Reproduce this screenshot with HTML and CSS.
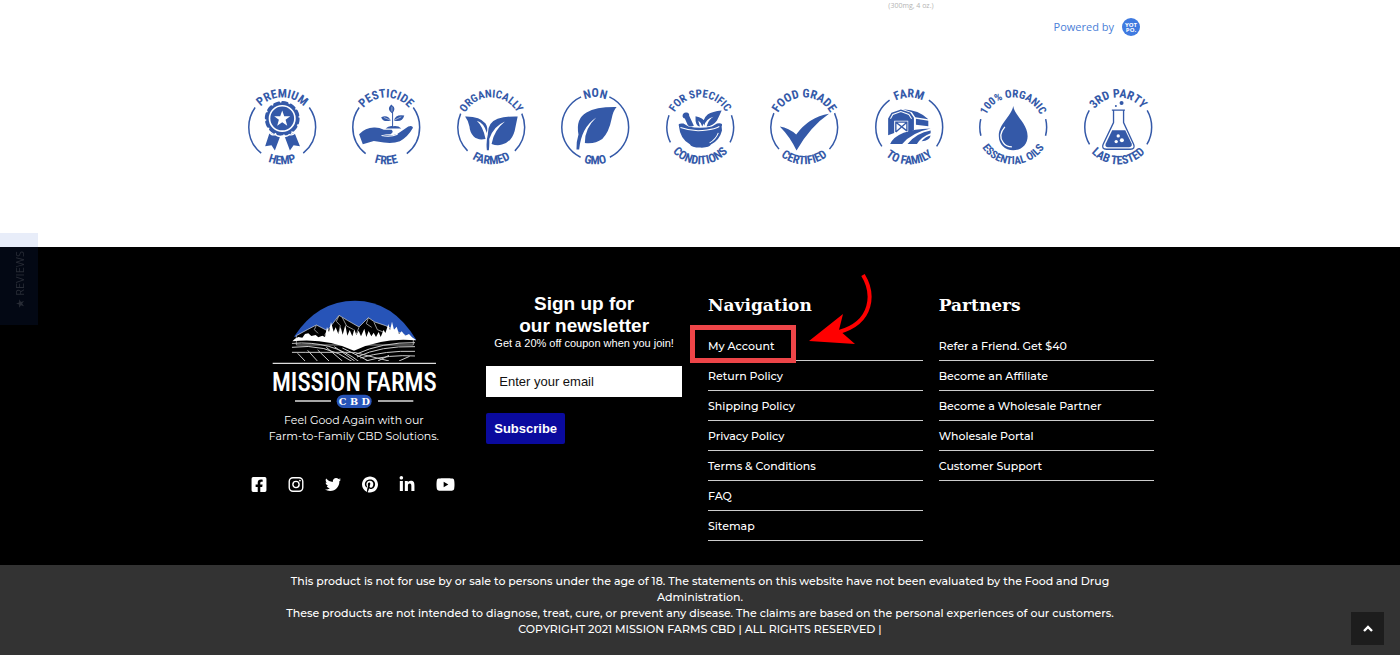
FILE: index.html
```html
<!DOCTYPE html>
<html lang="en">
<head>
<meta charset="utf-8">
<meta name="viewport" content="width=device-width, initial-scale=1">
<title>Mission Farms CBD</title>
<link rel="stylesheet" href="styles.css">
</head>
<body>
<svg class="defs" aria-hidden="true">
  <defs>
    <path id="arc-top" d="M-24 17A29.5 29.5 0 1 1 24 17"/>
    <path id="arc-bottom" d="M-35 -12A37 37 0 1 0 35 -12"/>
  </defs>
</svg>

<main class="top">
  <div class="reviews-end">
    <p class="product-note">(300mg, 4 oz.)</p>
    <a class="powered" href="#">Powered by
      <svg viewBox="0 0 18 18" width="18" height="18" aria-label="Yotpo"><circle cx="9" cy="9" r="9" fill="#3f7ae0"/><text x="9" y="8.5" class="yotpo">YOT</text><text x="9" y="14" class="yotpo">PO.</text></svg>
    </a>
  </div>

  <div class="badges">
    <svg class="badge short" viewBox="-52 -47 104 94">
      <circle class="ring" r="33.3" pathLength="360" stroke-dasharray="87 78 87 108" stroke-dashoffset="36"/>
      <text><textPath href="#arc-top" startOffset="50%">PREMIUM</textPath></text>
      <text><textPath href="#arc-bottom" startOffset="50%">HEMP</textPath></text>
      <g transform="scale(.3333) translate(-127 -141)">
        <path d="M89 158L76 198L95 195L105 211L121 168ZM164 158L180 198L161 195L150 211L134 168Z"/>
        <circle cx="127" cy="115" r="48"/>
        <circle cx="127" cy="115" r="48" fill="none" stroke="#3459a8" stroke-width="8" stroke-linecap="round" stroke-dasharray="14 11.1"/>
        <circle cx="127" cy="115" r="38" fill="none" stroke="#fff" stroke-width="5"/>
        <path fill="#fff" d="M127 91L133 108L151 108L137 119L142 137L127 126L112 137L117 119L103 108L121 108Z"/>
        <path fill="none" stroke="#fff" stroke-width="4" d="M84 151Q95 168 106 163Q116 172 127 167Q139 172 149 163Q160 167 170 151"/>
      </g>
    </svg>
    <svg class="badge short" viewBox="-52 -47 104 94">
      <circle class="ring" r="33.3" pathLength="360" stroke-dasharray="88 76 88 108" stroke-dashoffset="36"/>
      <text><textPath href="#arc-top" startOffset="50%">PESTICIDE</textPath></text>
      <text><textPath href="#arc-bottom" startOffset="50%">FREE</textPath></text>
      <g transform="scale(.3333) translate(-442 -141)">
        <path d="M361 162Q380 142 405 142Q420 141 435 149L458 149Q466 156 455 162L432 163Q455 168 475 161L508 139Q520 134 522 143Q507 170 483 183Q462 191 435 187L405 182L372 192Z"/>
        <path fill="none" stroke="#fff" stroke-width="3" d="M428 166Q455 172 476 162"/>
        <path d="M440 145Q450 135 463 138Q478 136 487 145ZM459 99Q442 87 457 73Q474 85 460 99ZM456 121Q432 127 427 111Q446 102 456 121ZM465 121Q470 101 496 106Q490 128 465 121Z"/>
        <path fill="none" stroke="#3459a8" stroke-width="3" d="M461 142V90"/>
        <path fill="none" stroke="#fff" stroke-width="1.5" d="M435 112L455 120M487 110L466 120M459 80V94"/>
      </g>
    </svg>
    <svg class="badge" viewBox="-52 -47 104 94">
      <circle class="ring" r="33.3" pathLength="360" stroke-dasharray="69 90 69 132" stroke-dashoffset="24"/>
      <text><textPath href="#arc-top" startOffset="50%">ORGANICALLY</textPath></text>
      <text class="short"><textPath href="#arc-bottom" startOffset="50%">FARMED</textPath></text>
      <g transform="scale(.3333) translate(-754 -141)">
        <path d="M676 109Q720 108 737 130Q745 143 741 158Q732 128 711 122Q730 140 737 176Q714 181 701 168Q690 156 689 139Q686 122 676 109Z"/>
        <path d="M833 109Q828 133 824 152Q815 185 786 193Q771 197 755 191Q762 150 795 124Q761 138 748 176Q749 192 747 210H741Q738 185 744 162Q743 127 773 116Q798 108 833 109Z"/>
      </g>
    </svg>
    <svg class="badge short" viewBox="-52 -47 104 94">
      <circle class="ring" r="33.3" pathLength="360" stroke-dasharray="129 52 129 50" stroke-dashoffset="65"/>
      <text><textPath href="#arc-top" startOffset="50%">NON</textPath></text>
      <text><textPath href="#arc-bottom" startOffset="50%">GMO</textPath></text>
      <g transform="scale(.3333) translate(-137 -141)">
        <path d="M201 81Q191 91 186 116Q178 157 158 176Q136 192 106 188Q105 145 140 112Q95 142 89 208H81Q80 185 87 163Q78 115 111 97Q140 80 201 81Z"/>
      </g>
    </svg>
    <svg class="badge" viewBox="-52 -47 104 94">
      <circle class="ring" r="33.3" pathLength="360" stroke-dasharray="48 126 48 138" stroke-dashoffset="21"/>
      <text><textPath href="#arc-top" startOffset="50%">FOR SPECIFIC</textPath></text>
      <text class="short"><textPath href="#arc-bottom" startOffset="50%">CONDITIONS</textPath></text>
      <g transform="scale(.3333) translate(-450 -141)">
        <path d="M386 136Q383 128 400 130L415 139Q450 147 485 139L500 130Q520 127 514 139L515 151Q508 180 482 193Q478 203 450 202Q423 202 419 192Q390 177 386 136Z"/>
        <path d="M397 108Q398 96 409 97Q418 98 417 107L431 137Q420 142 413 135L404 115Q399 115 397 108ZM436 108Q460 113 463 124L456 139Q452 126 444 121L449 139Q434 137 436 108ZM514 91Q507 107 500 121Q488 138 469 139Q475 118 490 110Q467 116 462 137Q455 117 473 102Q486 94 514 91Z"/>
        <path fill="none" stroke="#fff" stroke-width="3" d="M391 142Q430 156 470 149Q493 147 507 139M478 188Q497 177 504 158"/>
      </g>
    </svg>
    <svg class="badge short" viewBox="-52 -47 104 94">
      <circle class="ring" r="33.3" pathLength="360" stroke-dasharray="66 98 66 130" stroke-dashoffset="25"/>
      <text><textPath href="#arc-top" startOffset="50%">FOOD GRADE</textPath></text>
      <text><textPath href="#arc-bottom" startOffset="50%">CERTIFIED</textPath></text>
      <path transform="scale(.3333) translate(-764 -141)" d="M691 139Q718 143 740 163Q778 111 838 101Q781 140 741 211Q722 170 691 139Z"/>
    </svg>
    <svg class="badge short" viewBox="-52 -47 104 94">
      <circle class="ring" r="33.3" pathLength="360" stroke-dasharray="89 110 89 72" stroke-dashoffset="54"/>
      <text><textPath href="#arc-top" startOffset="50%">FARM</textPath></text>
      <text><textPath href="#arc-bottom" startOffset="50%">TO FAMILY</textPath></text>
      <g transform="scale(.3333) translate(-147 -141)">
        <path d="M84 165V115L94 98L122 88L150 97L161 113V150L144 157V122H102V158Z"/>
        <path d="M129 87Q176 89 204 117L165 111L155 96ZM167 116L204 122V138L167 134Z"/>
        <path fill="none" stroke="#3459a8" stroke-width="4" d="M107 155V126H140V152M107 126L140 152M140 126L107 155"/>
        <path fill="none" stroke="#fff" stroke-width="3" d="M91 116L98 103L122 94L146 103L154 116"/>
        <path d="M90 191Q110 148 211 145Q155 157 126 191ZM142 191Q169 158 211 151V159Q184 169 170 191ZM184 183Q195 170 211 166Q208 182 184 183Z"/>
      </g>
    </svg>
    <svg class="badge" viewBox="-52 -47 104 94">
      <circle class="ring" r="33.3" pathLength="360" stroke-dasharray="29 150 29 152" stroke-dashoffset="14"/>
      <text><textPath href="#arc-top" startOffset="50%">100% ORGANIC</textPath></text>
      <text><textPath href="#arc-bottom" startOffset="50%">ESSENTIAL OILS</textPath></text>
      <g transform="scale(.3333) translate(-459 -141)">
        <path d="M459 78C464 109 502 130 502 168C502 192 484 210 459 210C434 210 416 192 416 168C416 130 454 109 459 78Z"/>
        <path fill="none" stroke="#fff" stroke-width="4" d="M434 140Q412 166 429 187Q437 199 455 200"/>
      </g>
    </svg>
    <svg class="badge short" viewBox="-52 -47 104 94">
      <circle class="ring" r="33.3" pathLength="360" stroke-dasharray="61 118 61 120" stroke-dashoffset="30"/>
      <text><textPath href="#arc-top" startOffset="50%">3RD PARTY</textPath></text>
      <text><textPath href="#arc-bottom" startOffset="50%">LAB TESTED</textPath></text>
      <g transform="scale(.3333) translate(-773 -141)">
        <path fill="none" stroke="#3459a8" stroke-width="4" d="M754 90H793M759 92V127L728 192Q722 206 738 207H809Q825 206 819 192L789 127V92"/>
        <path d="M755 150H794L813 190Q816 200 806 201H741Q732 200 736 190Z"/>
        <circle cx="783" cy="69" r="6"/><circle cx="766" cy="78" r="3"/>
        <g fill="#fff"><circle cx="773" cy="167" r="5"/><circle cx="784" cy="180" r="6"/><circle cx="767" cy="184" r="5"/></g>
      </g>
    </svg>
  </div>
</main>

<footer>
  <div class="footer-main">
    <div class="columns">
      <section class="brand">
        <svg class="logo" viewBox="96 30 498 326">
          <clipPath id="field"><path d="M158 158Q270 145 345 187Q430 145 528 153V213H158Z"/></clipPath>
          <path fill="#2754b8" d="M165 140Q235 32 348 32Q462 32 532 150Z"/>
          <path fill="#000" stroke="#ddd" stroke-width="2" d="M172 137L205 119L232 105L265 122L300 76L325 91L360 111L388 83L407 96L440 107L475 125L523 147V165H172Z"/>
          <path fill="none" stroke="#ddd" stroke-width="2" d="M300 77L292 94L304 107L299 130M310 83L323 108L344 119M388 84L382 101L398 112M405 97L415 119L440 129M232 106L226 119L237 130M265 122L257 136M360 112L352 132"/>
          <path fill="#fff" d="M160 154L168 146L178 141L190 143L198 132L208 130L217 138L230 135L238 142L250 137L258 141L264 111L270 126L276 96L284 125L290 112L298 132L305 111L311 134L319 105L325 137L332 120L340 139L346 118L352 135L359 122L366 139L376 116L382 141L389 123L397 139L404 128L411 141L419 126L425 141L434 119L439 130L448 102L453 121L459 95L465 119L473 110L480 132L488 124L499 137L510 132L519 142L532 151Q430 141 345 182Q260 143 160 154Z"/>
          <path fill="none" stroke="#ccc" stroke-width="3" clip-path="url(#field)" d="M158 160Q280 151 360 215M158 172Q260 158 340 215M158 187Q240 187 345 187M176 190L198 213M206 181L235 213M236 180L270 213M262 172L310 213M286 170L347 213M310 174L389 213M528 158Q430 156 350 193M528 170Q425 167 354 201M528 184Q440 181 364 204M528 198Q450 193 380 213M345 187L450 213M450 196L417 213M512 199L480 213"/>
          <path stroke="#ddd" stroke-width="4" d="M101 220H591M168 333H276M417 333H523"/>
          <text class="wordmark" x="346" y="303">MISSION FARMS</text>
          <rect x="293" y="314" width="105" height="40" rx="20" fill="#2754b8"/>
          <text class="wordmark-sub" x="346" y="345">C B D</text>
        </svg>
        <p>Feel Good Again with our<br>Farm-to-Family CBD Solutions.</p>
        <nav class="social" aria-label="Social media">
          <a href="#" aria-label="Facebook"><svg viewBox="0 0 448 512"><path d="M400 32H48A48 48 0 0 0 0 80v352a48 48 0 0 0 48 48h137.25V327.69h-63V256h63v-54.64c0-62.15 37-96.48 93.67-96.48 27.14 0 55.52 4.84 55.52 4.84v61h-31.27c-30.81 0-40.42 19.12-40.42 38.73V256h68.78l-11 71.69h-57.78V480H400a48 48 0 0 0 48-48V80a48 48 0 0 0-48-48z"/></svg></a>
          <a href="#" aria-label="Instagram"><svg viewBox="0 0 448 512"><rect x="20" y="52" width="408" height="408" rx="112" fill="none" stroke="#fff" stroke-width="42"/><circle cx="224" cy="256" r="94" fill="none" stroke="#fff" stroke-width="42"/><circle cx="343" cy="137" r="27"/></svg></a>
          <a href="#" aria-label="Twitter"><svg viewBox="0 0 512 512"><path d="M459.37 151.716c.325 4.548.325 9.097.325 13.645 0 138.72-105.583 298.558-298.558 298.558-59.452 0-114.68-17.219-161.137-47.106 8.447.974 16.568 1.299 25.34 1.299 49.055 0 94.213-16.568 130.274-44.832-46.132-.975-84.792-31.188-98.112-72.772 6.498.974 12.995 1.624 19.818 1.624 9.421 0 18.843-1.3 27.614-3.573-48.081-9.747-84.143-51.98-84.143-102.985v-1.299c13.969 7.797 30.214 12.67 47.431 13.319-28.264-18.843-46.781-51.005-46.781-87.391 0-19.492 5.197-37.36 14.294-52.954 51.655 63.675 129.3 105.258 216.365 109.807-1.624-7.797-2.599-15.918-2.599-24.04 0-57.828 46.782-104.934 104.934-104.934 30.213 0 57.502 12.67 76.67 33.137 23.715-4.548 46.456-13.32 66.599-25.34-7.798 24.366-24.366 44.833-46.132 57.827 21.117-2.273 41.584-8.122 60.426-16.243-14.292 20.791-32.161 39.308-52.628 54.253z"/></svg></a>
          <a href="#" aria-label="Pinterest"><svg viewBox="0 0 496 512"><path d="M496 256c0 137-111 248-248 248-25.6 0-50.2-3.9-73.4-11.1 10.1-16.5 25.2-43.5 30.8-65 3-11.6 15.4-59 15.4-59 8.1 15.4 31.7 28.5 56.8 28.5 74.8 0 128.7-68.8 128.7-154.3 0-81.9-66.9-143.2-152.9-143.2-107 0-163.9 71.8-163.9 150.1 0 36.4 19.4 81.7 50.3 96.1 4.7 2.2 7.2 1.2 8.3-3.3.8-3.4 5-20.3 6.9-28.1.6-2.5.3-4.7-1.7-7.1-10.1-12.5-18.3-35.3-18.3-56.6 0-54.7 41.4-107.6 112-107.6 60.9 0 103.6 41.5 103.6 100.9 0 67.1-33.9 113.6-78 113.6-24.3 0-42.6-20.1-36.7-44.8 7-29.5 20.5-61.3 20.5-82.6 0-19-10.2-34.9-31.4-34.9-24.9 0-44.9 25.7-44.9 60.2 0 22 7.4 36.8 7.4 36.8s-24.5 103.8-29 123.2c-5 21.4-3 51.6-.9 71.2C65.4 450.9 0 361.1 0 256 0 119 111 8 248 8s248 111 248 248z"/></svg></a>
          <a href="#" aria-label="LinkedIn"><svg viewBox="0 0 448 512"><path d="M100.28 448H7.4V148.9h92.88zM53.79 108.1C24.09 108.1 0 83.5 0 53.8a53.79 53.79 0 0 1 107.58 0c0 29.7-24.1 54.3-53.79 54.3zM447.9 448h-92.68V302.4c0-34.7-.7-79.2-48.29-79.2-48.29 0-55.69 37.7-55.69 76.7V448h-92.78V148.9h89.08v40.8h1.3c12.4-23.5 42.69-48.3 87.88-48.3 94 0 111.28 61.9 111.28 142.3V448z"/></svg></a>
          <a href="#" aria-label="YouTube"><svg viewBox="0 0 576 512"><path d="M549.655 124.083c-6.281-23.65-24.787-42.276-48.284-48.597C458.781 64 288 64 288 64S117.22 64 74.629 75.486c-23.497 6.322-42.003 24.947-48.284 48.597-11.412 42.867-11.412 132.305-11.412 132.305s0 89.438 11.412 132.305c6.281 23.65 24.787 41.5 48.284 47.821C117.22 448 288 448 288 448s170.78 0 213.371-11.486c23.497-6.321 42.003-24.171 48.284-47.821 11.412-42.867 11.412-132.305 11.412-132.305s0-89.438-11.412-132.305zm-317.51 213.508V175.185l142.739 81.205-142.739 81.201z"/></svg></a>
        </nav>
      </section>

      <form class="newsletter" onsubmit="return false">
        <h2>Sign up for<br>our newsletter</h2>
        <p>Get a 20% off coupon when you join!</p>
        <input type="email" placeholder="Enter your email" aria-label="Enter your email">
        <button type="submit">Subscribe</button>
      </form>

      <nav class="links" aria-labelledby="nav-title">
        <h3 id="nav-title">Navigation</h3>
        <ul>
          <li class="marked"><a href="#">My Account</a>
            <svg class="arrow" viewBox="0 0 66 76" aria-hidden="true"><path d="M55 4C66 22 66 51 31 61" fill="none" stroke="#f00" stroke-width="4"/><path fill="#f00" d="M1 70L35 43L31 59L47 73Z"/></svg>
          </li>
          <li><a href="#">Return Policy</a></li>
          <li><a href="#">Shipping Policy</a></li>
          <li><a href="#">Privacy Policy</a></li>
          <li><a href="#">Terms &amp; Conditions</a></li>
          <li><a href="#">FAQ</a></li>
          <li><a href="#">Sitemap</a></li>
        </ul>
      </nav>

      <nav class="links" aria-labelledby="partners-title">
        <h3 id="partners-title">Partners</h3>
        <ul>
          <li><a href="#">Refer a Friend. Get $40</a></li>
          <li><a href="#">Become an Affiliate</a></li>
          <li><a href="#">Become a Wholesale Partner</a></li>
          <li><a href="#">Wholesale Portal</a></li>
          <li><a href="#">Customer Support</a></li>
        </ul>
      </nav>
    </div>
  </div>
  <div class="legal">
    <p>This product is not for use by or sale to persons under the age of 18. The statements on this website have not been evaluated by the Food and Drug Administration.</p>
    <p>These products are not intended to diagnose, treat, cure, or prevent any disease. The claims are based on the personal experiences of our customers.</p>
    <p>COPYRIGHT 2021 MISSION FARMS CBD | ALL RIGHTS RESERVED |</p>
  </div>
</footer>

<button class="reviews-tab" type="button">★ REVIEWS</button>
<button class="to-top" type="button" aria-label="Back to top"><svg viewBox="0 0 10 8" width="10" height="8"><path d="M1 6L5 2L9 6" fill="none" stroke="#fff" stroke-width="2.4"/></svg></button>
</body>
</html>
```
FILE: styles.css
```css
*, *::before { box-sizing: border-box; }
body {
  margin: 0;
  min-height: 100vh;
  display: flex;
  flex-direction: column;
  background: #fff;
  color: #fff;
  font-family: Montserrat, Inter, sans-serif;
  font-size: 11px;
  line-height: 16px;
}
h2, h3, p, ul { margin: 0; padding: 0; }
a { color: inherit; text-decoration: none; }
.defs { position: absolute; width: 0; height: 0; }

/* End of the reviews widget and the quality badges */
.top { padding-bottom: 73px; }
.reviews-end {
  max-width: 940px;
  margin: 0 auto;
  padding-right: 30px;
  display: flex;
  justify-content: flex-end;
  align-items: flex-start;
  gap: 120px;
  height: 80px;
  font-family: "Open Sans", sans-serif;
}
.product-note {
  font-size: 7px;
  line-height: 12px;
  color: #b4b4b4;
  white-space: nowrap;
}
.powered {
  margin-top: 18px;
  display: flex;
  align-items: center;
  gap: 8px;
  color: #4a80d8;
}
.yotpo { font: bold 6px "Open Sans", sans-serif; fill: #fff; text-anchor: middle; }
.badges {
  max-width: 940px;
  margin: 0 auto;
  display: grid;
  grid-template-columns: repeat(9, 1fr);
}
.badge {
  display: block;
  width: 100%;
  fill: #3459a8;
}
.badge text {
  font: bold 11px "Liberation Sans Narrow", "Roboto Condensed", "Liberation Sans", sans-serif;
  text-anchor: middle;
}
.badge.short text, .badge text.short { font-size: 12px; }
.ring { fill: none; stroke: #3459a8; stroke-width: 1.5; }

/* Footer */
footer { flex: 1; display: flex; flex-direction: column; background: #333; }
.footer-main { background: #000; padding: 46px 16px 24px; }
.columns {
  max-width: 907px;
  margin: 0 auto;
  display: grid;
  grid-template-columns: repeat(4, 1fr);
  gap: 16px;
}
.brand { padding-top: 7px; text-align: center; }
.logo { display: block; width: 166px; margin: 0 auto 3px; }
.wordmark {
  font: 500 75px "Liberation Sans Narrow", "Roboto Condensed", "Liberation Sans", sans-serif;
  fill: #fff;
  text-anchor: middle;
}
.wordmark-sub { font: bold 29px "DejaVu Serif", serif; fill: #fff; text-anchor: middle; }
.social {
  display: flex;
  align-items: center;
  gap: 21px;
  margin-top: 32px;
  padding-left: 4px;
}
.social a { display: flex; width: 16px; }
.social a:last-child { width: 19px; }
.social svg { height: 17px; width: 100%; fill: #fff; }

.newsletter {
  padding: 0 10px 0 9px;
  font-family: "Liberation Sans", Arial, sans-serif;
  text-align: center;
}
.newsletter h2 { font-size: 19px; line-height: 22px; }
.newsletter p { line-height: 13px; }
.newsletter input {
  display: block;
  width: 100%;
  height: 31px;
  margin: 16px 0;
  padding: 0 13px;
  border: 0;
  background: #fff;
  color: #111;
  font: 13px "Liberation Sans", Arial, sans-serif;
}
.newsletter input::placeholder { color: #111; opacity: 1; }
.newsletter button {
  display: block;
  height: 31px;
  padding: 0 8px;
  border: 0;
  border-radius: 2px;
  background: #0a0a9e;
  color: #fff;
  font: bold 13px "Liberation Sans", Arial, sans-serif;
}

.links h3 {
  font: bold 17px/24px "Roboto Slab", "DejaVu Serif", serif;
  margin-bottom: 14px;
}
.links ul { list-style: none; }
.links li { position: relative; border-bottom: 1px solid #ccc; }
.links a { display: block; padding: 7px 0 6px; font-weight: 500; }
.marked::before {
  content: "";
  position: absolute;
  inset: -6px auto -3px -18px;
  width: 106px;
  border: 5px solid #ee4548;
}
.arrow {
  position: absolute;
  left: 100px;
  top: -60px;
  width: 66px;
  height: 76px;
}

.legal {
  flex: 1;
  width: 100%;
  max-width: 886px;
  margin: 0 auto;
  padding: 8px 16px 18px;
  text-align: center;
  font-weight: 500;
}

.reviews-tab {
  position: fixed;
  left: 0;
  top: 233px;
  width: 38px;
  height: 92px;
  padding: 16px 0;
  border: 0;
  background: rgba(30, 80, 200, .1);
  color: #272b35;
  font: 11px "Open Sans", "DejaVu Sans", sans-serif;
  writing-mode: sideways-lr;
  text-align: left;
}
.to-top {
  position: fixed;
  right: 16px;
  bottom: 10px;
  width: 33px;
  height: 33px;
  padding: 0;
  display: grid;
  place-items: center;
  border: 0;
  background: #1d1d1d;
}
```
